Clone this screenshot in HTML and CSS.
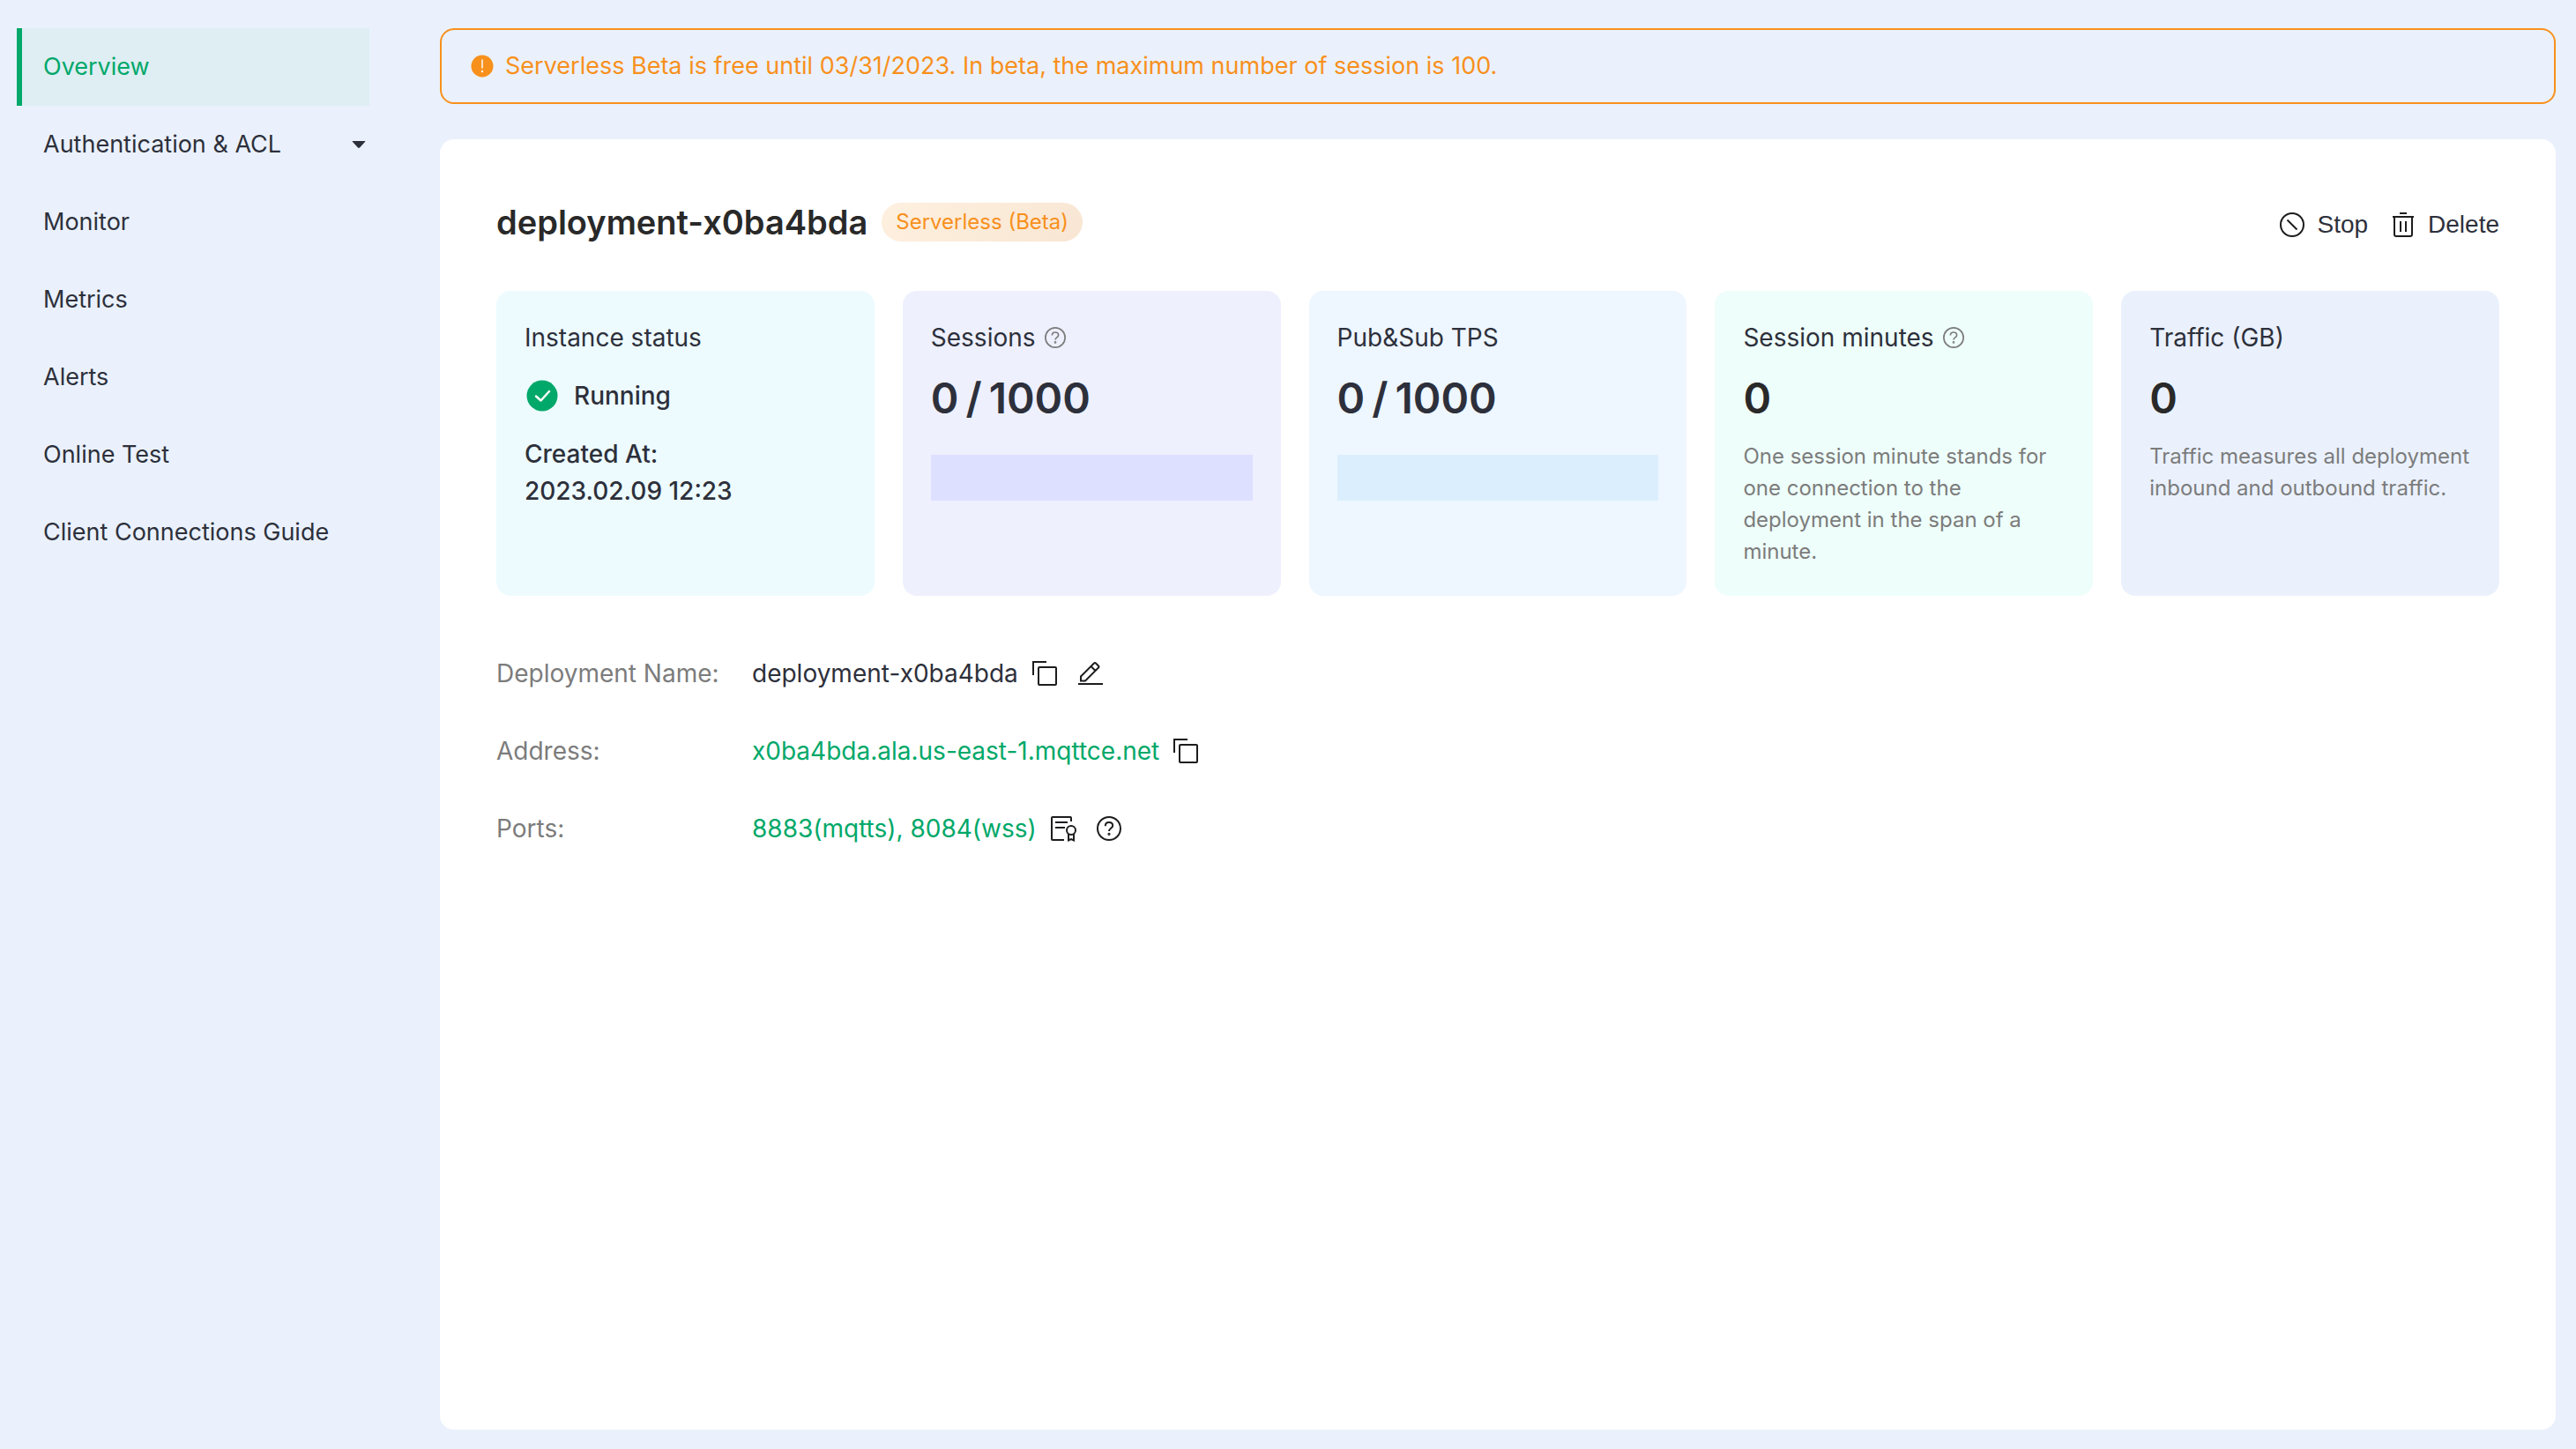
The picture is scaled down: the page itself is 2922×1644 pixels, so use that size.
FILE: index.html
```html
<!DOCTYPE html>
<html lang="en">
<head>
<meta charset="utf-8">
<meta name="viewport" content="width=device-width, initial-scale=1">
<title>Deployment overview</title>
<link rel="stylesheet" href="styles.css">
</head>
<body>
<svg class="sprite" aria-hidden="true">
  <symbol id="icon-copy" viewBox="0 0 28 28">
    <path d="M1 16V1h15" />
    <rect x="7" y="7" width="20" height="20" rx="1" />
  </symbol>
  <symbol id="icon-help" viewBox="0 0 28 28">
    <circle cx="14" cy="14" r="13" />
    <path d="M9.8 11.2c0-2.6 1.7-4.2 4.2-4.2s4.2 1.500 4.200 3.700c0 3-4.200 3.200-4.200 6.300" />
    <circle cx="14" cy="20.300" r=".6" />
  </symbol>
</svg>
<div class="layout">
  <nav class="sidebar" aria-label="Deployment">
    <a class="nav-item active" href="#overview">Overview</a>
    <a class="nav-item" href="#auth">Authentication &amp; ACL
      <svg class="caret" viewBox="0 0 16 8" aria-hidden="true"><path d="M1 0h14q1 0 0 1L9 7.500q-1 .9-2 0L1 1q-1-1 0-1z" /></svg>
    </a>
    <a class="nav-item" href="#monitor">Monitor</a>
    <a class="nav-item" href="#metrics">Metrics</a>
    <a class="nav-item" href="#alerts">Alerts</a>
    <a class="nav-item" href="#test">Online Test</a>
    <a class="nav-item" href="#guide">Client Connections Guide</a>
  </nav>
  <main class="main">
    <div class="notice" role="status">
      <svg class="notice-icon" viewBox="0 0 26 26" aria-hidden="true"><circle cx="13" cy="13" r="12.500" fill="#f8901c" /><path d="M13 6v9" stroke="#fff" stroke-width="1.500" stroke-linecap="round" /><circle cx="13" cy="19" r="1.200" fill="#fff" /></svg>
      <span>Serverless Beta is free until 03/31/2023. In beta, the maximum number of session is 100.</span>
    </div>
    <section class="panel">
      <header class="panel-head">
        <h1 class="title">deployment-x0ba4bda</h1>
        <span class="badge">Serverless (Beta)</span>
        <div class="actions">
          <button class="action" type="button">
            <svg class="icon" viewBox="0 0 28 28" aria-hidden="true"><circle cx="14" cy="14" r="13" /><path d="M8.500 8.500l11 11" /></svg>
            Stop
          </button>
          <button class="action" type="button">
            <svg class="icon" viewBox="0 0 28 28" aria-hidden="true"><path d="M10 1h8M2 5h24M4 5v20q0 2 2 2h16q2 0 2-2V5M11 10v12M17 10v12" /></svg>
            Delete
          </button>
        </div>
      </header>
      <div class="cards">
        <article class="card card-status">
          <h2 class="card-title">Instance status</h2>
          <p class="status"><svg class="status-icon" viewBox="0 0 36 36" aria-hidden="true"><circle cx="18" cy="18" r="17.500" fill="#00a869" /><path d="M11 18.500l5.500 5 9.500-10.500" fill="none" stroke="#fff" stroke-width="2.500" stroke-linecap="round" stroke-linejoin="round" /></svg>Running</p>
          <p class="created">Created At:<br>2023.02.09 12:23</p>
        </article>
        <article class="card card-sessions">
          <h2 class="card-title">Sessions <svg class="hint" aria-hidden="true"><use href="#icon-help" /></svg></h2>
          <p class="figure">0<span class="slash">/</span>1000</p>
          <div class="meter"></div>
        </article>
        <article class="card card-tps">
          <h2 class="card-title">Pub&amp;Sub TPS</h2>
          <p class="figure">0<span class="slash">/</span>1000</p>
          <div class="meter"></div>
        </article>
        <article class="card card-minutes">
          <h2 class="card-title">Session minutes <svg class="hint" aria-hidden="true"><use href="#icon-help" /></svg></h2>
          <p class="figure figure-total">0</p>
          <p class="note">One session minute stands for one connection to the deployment in the span of a minute.</p>
        </article>
        <article class="card card-traffic">
          <h2 class="card-title">Traffic (GB)</h2>
          <p class="figure figure-total">0</p>
          <p class="note">Traffic measures all deployment inbound and outbound traffic.</p>
        </article>
      </div>
      <dl class="details">
        <dt>Deployment Name:</dt>
        <dd>deployment-x0ba4bda
          <span class="tools">
            <button class="tool" type="button" aria-label="Copy name"><svg class="icon"><use href="#icon-copy" /></svg></button>
            <button class="tool" type="button" aria-label="Edit name"><svg class="icon" viewBox="0 0 28 28"><path d="M0 26h28M3 22.500v-5L18 2.500q1-1 2 0l3 3q1 1 0 2L8 22.500zM14.500 6l5 5" /></svg></button>
          </span>
        </dd>
        <dt>Address:</dt>
        <dd><span class="value-link">x0ba4bda.ala.us-east-1.mqttce.net</span>
          <span class="tools">
            <button class="tool" type="button" aria-label="Copy address"><svg class="icon"><use href="#icon-copy" /></svg></button>
          </span>
        </dd>
        <dt>Ports:</dt>
        <dd><span class="value-link">8883(mqtts), 8084(wss)</span>
          <span class="tools">
            <button class="tool" type="button" aria-label="Certificate"><svg class="icon" viewBox="0 0 28 28"><path d="M15 27H2q-1 0-1-1V2q0-1 1-1h20q1 0 1 1v4M5 7h14M5 13h11" /><circle cx="23" cy="16" r="5" /><path d="M20 20v7.500l3-1.500 3 1.500V20" /></svg></button>
            <button class="tool" type="button" aria-label="Help"><svg class="icon"><use href="#icon-help" /></svg></button>
          </span>
        </dd>
      </dl>
    </section>
  </main>
</div>
</body>
</html>
```
FILE: styles.css
```css
* {
  box-sizing: border-box;
}

body {
  margin: 0;
  background: #eaf1fc;
  color: #2d303b;
  font: 28px/42px Inter, "Liberation Sans", sans-serif;
}

h1, h2, p, dl, dd {
  margin: 0;
}

button {
  padding: 0;
  border: 0;
  background: none;
  color: inherit;
  cursor: pointer;
}

svg {
  display: block;
  flex: none;
  overflow: visible;
}

.sprite {
  position: absolute;
  width: 0;
  height: 0;
}

.layout {
  display: flex;
  gap: 80px;
  min-height: 100vh;
  padding: 32px 23px 22px 19px;
}

/* Sidebar */
.sidebar {
  flex: 0 0 400px;
  font-size: 27px;
}

.nav-item {
  display: flex;
  align-items: center;
  justify-content: space-between;
  height: 88px;
  padding: 0 4px 0 24px;
  border-left: 6px solid transparent;
  color: inherit;
  text-decoration: none;
}

.nav-item.active {
  border-color: #00a869;
  background: #deeef3;
  color: #00a869;
}

.caret {
  width: 16px;
  height: 8px;
  fill: #2d303b;
}

/* Main column */
.main {
  display: flex;
  flex: 1;
  flex-direction: column;
  gap: 40px;
  min-width: 0;
}

.notice {
  display: flex;
  align-items: center;
  gap: 13px;
  padding: 20px 33px;
  border: 2px solid #f8901c;
  border-radius: 16px;
  color: #f8901c;
  font-size: 27px;
}

.notice-icon {
  width: 26px;
  height: 26px;
}

.panel {
  flex: 1;
  padding: 64px;
  border-radius: 16px;
  background: #fff;
}

.panel-head {
  display: flex;
  align-items: center;
  height: 60px;
  margin-bottom: 48px;
}

.title {
  color: #292929;
  font-size: 38px;
  font-weight: 600;
  line-height: 60px;
}

.badge {
  margin-left: 16px;
  padding: 0 16px;
  border-radius: 22px;
  background: linear-gradient(135deg, #fef0df, #f8e6d3);
  color: #f8901c;
  font-size: 24px;
  line-height: 44px;
}

.actions {
  display: flex;
  gap: 26px;
  margin-left: auto;
  padding-top: 6px;
}

.action {
  display: flex;
  align-items: center;
  gap: 14px;
  font: 28px/42px "Liberation Sans", sans-serif;
}

.icon {
  width: 28px;
  height: 28px;
  fill: none;
  stroke: #1d1d1f;
  stroke-width: 2;
}

/* Summary cards */
.cards {
  display: grid;
  grid-template-columns: repeat(5, 1fr);
  gap: 32px;
}

.card {
  min-height: 346px;
  padding: 32px;
  border-radius: 16px;
}

.card-status { background: #edfbff; }
.card-sessions { background: #eef0fe; }
.card-tps { background: #eef6ff; }
.card-minutes { background: #eefefa; }
.card-traffic { background: #eaf1fc; }

.card-title {
  display: flex;
  align-items: center;
  gap: 10px;
  font-size: 28px;
  font-weight: 400;
}

.hint {
  width: 24px;
  height: 24px;
  fill: none;
  stroke: #7c7c7c;
  stroke-width: 2;
}

.status {
  display: flex;
  align-items: center;
  gap: 18px;
  margin: 24px 0;
  padding-left: 2px;
  font-weight: 500;
}

.status-icon {
  width: 36px;
  height: 36px;
}

.created {
  font-weight: 500;
}

.figure {
  margin: 12px 0;
  font-size: 48px;
  font-weight: 600;
  line-height: 72px;
}

.figure-total {
  color: #292929;
}

.slash {
  margin: 0 8px;
}

.meter {
  height: 52px;
  margin-top: 28px;
}

.card-sessions .meter { background: #dde0fe; }
.card-tps .meter { background: #dbeefe; }

.note {
  color: #7c7c7c;
  font-size: 24px;
  line-height: 36px;
}

/* Deployment details */
.details {
  display: grid;
  grid-template-columns: 290px 1fr;
  grid-auto-rows: 88px;
  align-items: center;
  margin-top: 44px;
}

.details dt {
  color: #7c7c7c;
}

.details dd {
  display: flex;
  align-items: center;
  gap: 16px;
}

.value-link {
  color: #00a869;
}

.tools {
  display: flex;
  gap: 24px;
}
```
